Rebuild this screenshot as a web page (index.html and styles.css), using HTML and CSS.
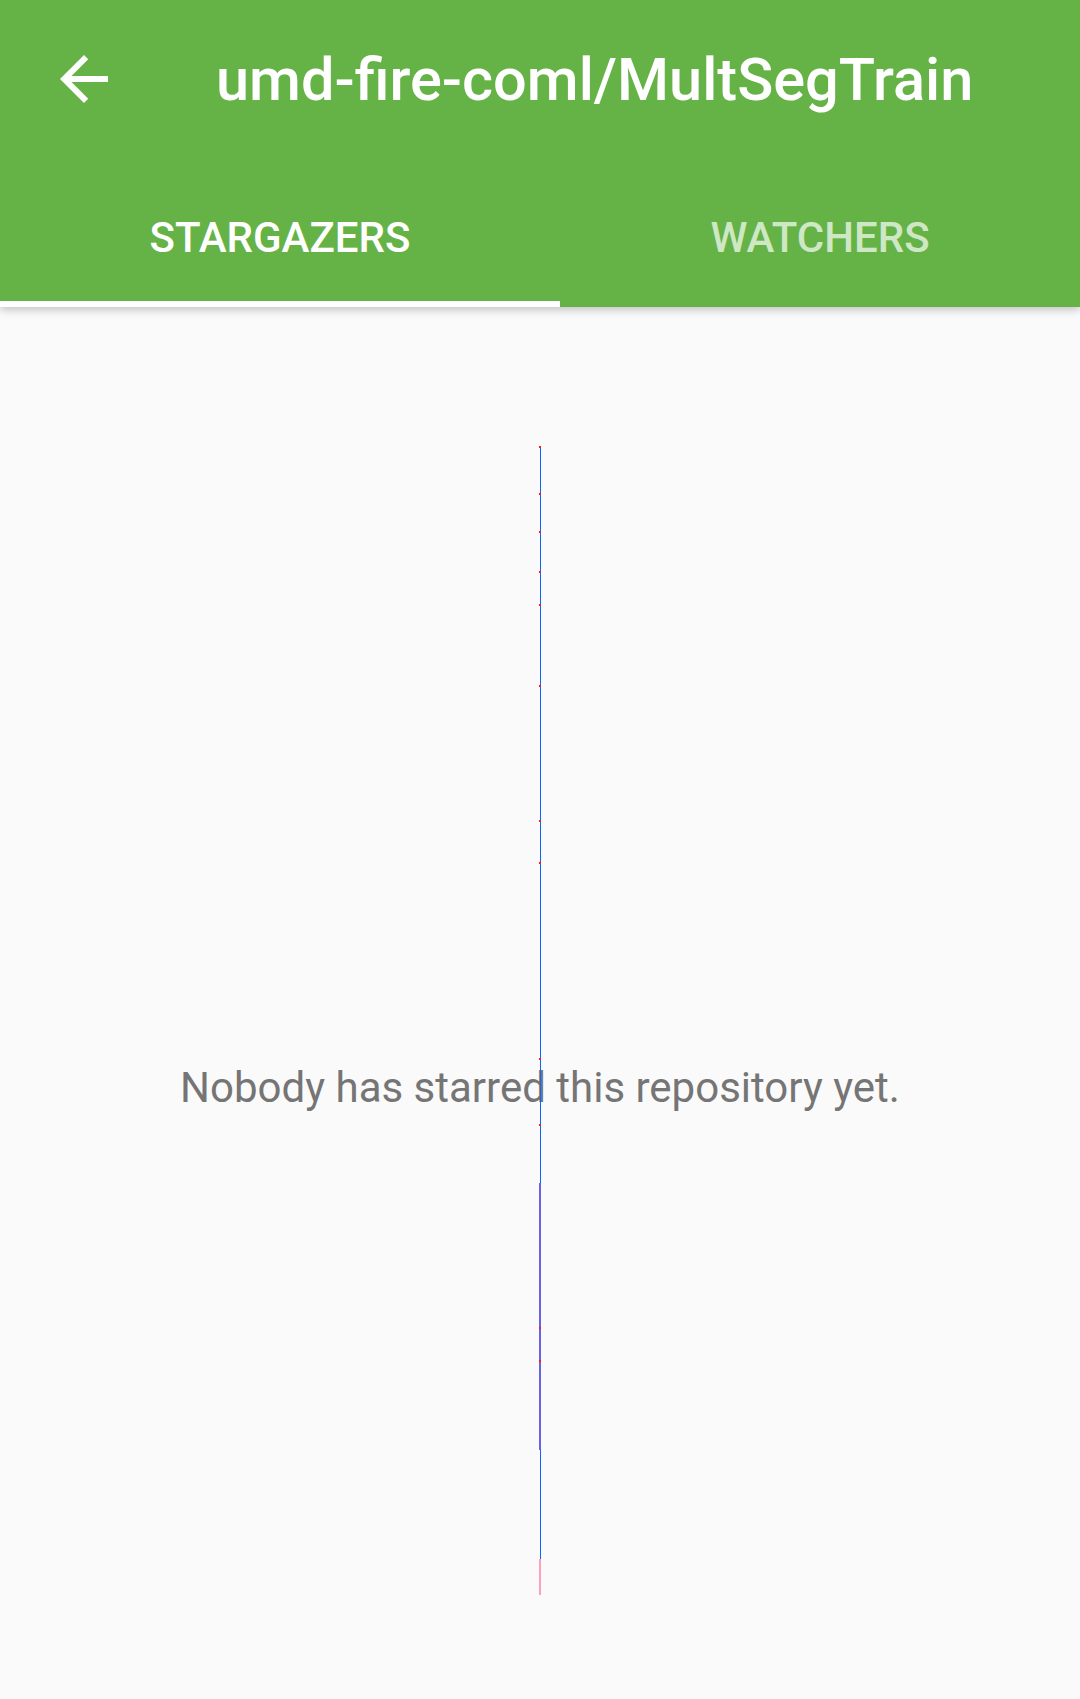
FILE: index.html
```html
<!DOCTYPE html>
<html lang="en">
<head>
<meta charset="utf-8">
<title>umd-fire-coml/MultSegTrain</title>
<link rel="stylesheet" href="styles.css">
</head>
<body>
<div class="screen">
  <header class="appbar">
    <div class="toolbar">
      <button class="back" aria-label="Back">
        <svg viewBox="0 0 24 24" width="72" height="72"><path fill="#fff" d="M20 11H7.83l5.59-5.59L12 4l-8 8 8 8 1.41-1.41L7.83 13H20v-2z"/></svg>
      </button>
      <h1 class="title">umd-fire-coml/MultSegTrain</h1>
    </div>
    <nav class="tabs">
      <div class="tab tab-first active">STARGAZERS</div>
      <div class="tab tab-second">WATCHERS</div>
    </nav>
  </header>
  <main class="content">
    <p class="empty">Nobody has starred this repository yet.</p>
  </main>
  <svg class="overlay" width="1080" height="1699" viewBox="0 0 1080 1699">
    <rect x="540" y="446" width="1" height="1113" fill="#0a66ff"/>
    <rect x="539" y="1183" width="2" height="267" fill="#6a62e6"/>
    <rect x="539" y="1559" width="2" height="36" fill="#ffa0bd"/>
    <g fill="#ff1a1a">
      <rect x="539" y="446" width="2" height="2"/>
      <rect x="539" y="493" width="2" height="2"/>
      <rect x="539" y="531" width="2" height="2"/>
      <rect x="539" y="571" width="2" height="2"/>
      <rect x="539" y="604" width="2" height="2"/>
      <rect x="539" y="685" width="2" height="2"/>
      <rect x="539" y="820" width="2" height="2"/>
      <rect x="539" y="862" width="2" height="2"/>
      <rect x="539" y="1058" width="2" height="2"/>
      <rect x="539" y="1124" width="2" height="2"/>
      <rect x="539" y="1327" width="2" height="2"/>
      <rect x="539" y="1360" width="2" height="2"/>
    </g>
  </svg>
</div>
</body>
</html>
```

FILE: styles.css
```css
html, body {
  margin: 0;
  padding: 0;
  background: #fafafa;
}

.screen {
  position: relative;
  width: 1080px;
  height: 1699px;
  overflow: hidden;
  font-family: Roboto, "Noto Sans", "Liberation Sans", sans-serif;
  background: #fafafa;
}

.appbar {
  position: relative;
  z-index: 1;
  background: #65b346;
  box-shadow: 0 3px 8px rgba(0, 0, 0, 0.22);
}

.toolbar {
  height: 160px;
  display: flex;
  align-items: center;
  padding-left: 48px;
}

.back {
  width: 72px;
  height: 72px;
  padding: 0;
  border: 0;
  background: none;
  display: flex;
  align-items: center;
  justify-content: center;
  margin-top: -2px;
}

.back svg {
  display: block;
}

.title {
  margin: 0 0 0 96px;
  color: #fff;
  font-size: 59.5px;
  font-weight: 500;
  line-height: 70px;
  white-space: nowrap;
}

.tabs {
  display: flex;
  height: 147px;
}

.tab {
  display: flex;
  align-items: center;
  justify-content: center;
  box-sizing: border-box;
  padding-top: 14px;
  font-size: 42px;
  font-weight: 500;
  line-height: 42px;
  color: rgba(255, 255, 255, 0.7);
  border-bottom: 6px solid transparent;
}

.tab-first {
  width: 560px;
}

.tab-second {
  width: 520px;
}

.tab.active {
  color: #fff;
  border-bottom-color: #fff;
}

.content {
  padding-top: 756px;
}

.empty {
  margin: 0;
  text-align: center;
  color: #757575;
  font-size: 42px;
  line-height: 50px;
}

.overlay {
  position: absolute;
  left: 0;
  top: 0;
  z-index: 2;
  pointer-events: none;
}
```
